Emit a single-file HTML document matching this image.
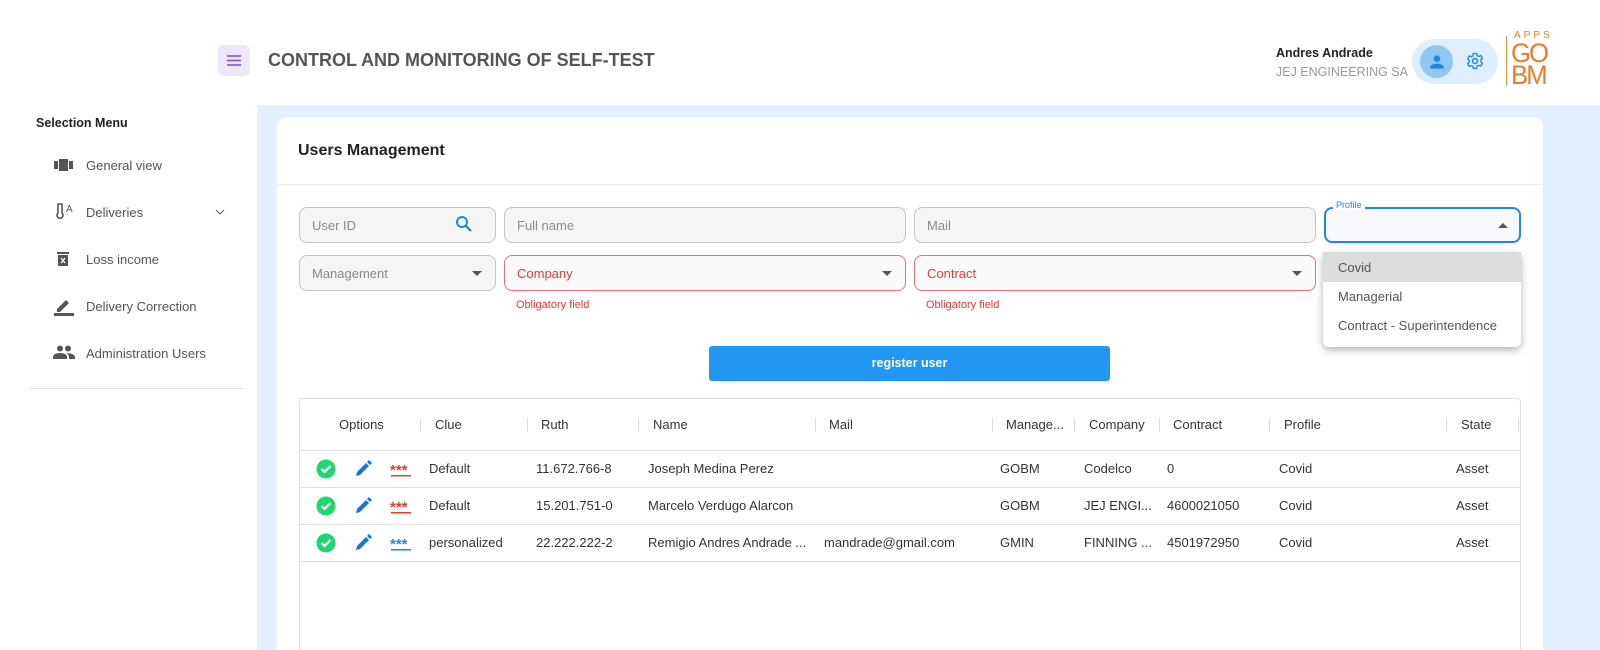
<!DOCTYPE html>
<html><head><meta charset="utf-8"><style>
*{box-sizing:border-box;margin:0;padding:0}
html,body{width:1600px;height:650px;overflow:hidden}
body{background:#fff;font-family:"Liberation Sans",Arial,sans-serif;position:relative;color:#333}
.a{position:absolute}
.blue{left:257px;top:105px;width:1343px;height:545px;background:#e3f0fd}
.card{left:277px;top:117px;width:1266px;height:533px;background:#fff;border-radius:10px 10px 0 0}
.inp{position:absolute;height:36px;border:1px solid #c4c4c4;border-radius:8px;background:#f5f5f5;font-size:13px;color:#8a8a8a;padding:10px 12px}
.red{border-color:#e57373;color:#e53935;background:#fafafa}
.err{position:absolute;font-size:11px;color:#e53935}
.tri{position:absolute;width:0;height:0;border-left:5px solid transparent;border-right:5px solid transparent;border-top:5px solid #555}
.th{position:absolute;font-size:13px;color:#333;top:417px}
.sep{position:absolute;width:1px;height:14px;background:#ddd;top:418px}
.td{position:absolute;font-size:13px;color:#333}
.menu{position:absolute;left:86px;font-size:13px;color:#555}
.hl{position:absolute;left:299px;width:1221px;height:1px;background:#e0e0e0}
</style></head><body>
<div class="a" style="left:218px;top:45px;width:32px;height:31px;border-radius:6px;background:#ede7f9"></div>
<svg class="a" style="left:226px;top:54px" width="16" height="13"><g stroke="#7e57c2" stroke-width="1.6"><line x1="1" y1="2" x2="15" y2="2"/><line x1="1" y1="6.5" x2="15" y2="6.5"/><line x1="1" y1="11" x2="15" y2="11"/></g></svg>
<div class="a" style="left:268px;top:50px;font-size:18px;font-weight:bold;color:#555">CONTROL AND MONITORING OF SELF-TEST</div>
<div class="a" style="left:1276px;top:46px;font-size:12.5px;font-weight:bold;color:#222">Andres Andrade</div>
<div class="a" style="left:1276px;top:65px;font-size:12.5px;color:#999">JEJ ENGINEERING SA</div>
<div class="a" style="left:1412px;top:39px;width:86px;height:45px;border-radius:23px;background:#deeefb"></div>
<div class="a" style="left:1420px;top:45px;width:33px;height:33px;border-radius:50%;background:#90c8f5"></div>
<svg class="a" style="left:1427px;top:52px" width="20" height="20" viewBox="0 0 24 24"><path fill="#1e88e5" d="M12 12c2.2 0 4-1.8 4-4s-1.8-4-4-4-4 1.8-4 4 1.8 4 4 4zm0 2c-2.7 0-8 1.3-8 4v2h16v-2c0-2.7-5.3-4-8-4z"/></svg>
<svg class="a" style="left:1465px;top:51px" width="20" height="20" viewBox="0 0 24 24"><circle cx="12" cy="12" r="3" fill="none" stroke="#1e88e5" stroke-width="1.8"/><path fill="none" stroke="#1e88e5" stroke-width="1.6" d="M10 3h4l.5 2.5 2 1 2.4-1 2 3.4-1.9 1.7v2.4l1.9 1.7-2 3.4-2.4-1-2 1L14 21h-4l-.5-2.5-2-1-2.4 1-2-3.4 1.9-1.7v-2.4L3.1 9.3l2-3.4 2.4 1 2-1z"/></svg>
<div class="a" style="left:1506px;top:36px;width:1px;height:50px;background:#f08a3c"></div>
<div class="a" style="left:1514px;top:30px;font-size:10px;letter-spacing:3px;color:#f07a2a">APPS</div>
<div class="a" style="left:1511px;top:42px;font-size:27px;line-height:22px;color:#f07a2a;letter-spacing:-2px;transform:scaleX(0.95);transform-origin:left">GO<br>BM</div>
<div class="a" style="left:36px;top:116px;font-size:12.5px;font-weight:bold;color:#222">Selection Menu</div>
<svg class="a" style="left:54px;top:158px" width="20" height="14"><rect x="0" y="3" width="4" height="8" fill="#555"/><rect x="5" y="1" width="9" height="12" fill="#555"/><rect x="15" y="3" width="4" height="8" fill="#555"/></svg>
<div class="menu" style="top:158px">General view</div>
<svg class="a" style="left:55px;top:202px" width="20" height="18"><path d="M3 2h4v9a3 3 0 1 1-4 0z" fill="none" stroke="#555" stroke-width="1.6"/><text x="11" y="10" font-size="10" fill="#555" font-family="Liberation Sans">A</text></svg>
<div class="menu" style="top:205px">Deliveries</div>
<svg class="a" style="left:215px;top:209px" width="10" height="6"><path d="M1 1l4 4 4-4" fill="none" stroke="#666" stroke-width="1.2"/></svg>
<svg class="a" style="left:57px;top:251px" width="12" height="16"><rect x="0" y="1" width="12" height="2" fill="#555"/><rect x="1" y="4" width="10" height="11" fill="#555"/><path d="M4 7l4 5M8 7l-4 5" stroke="#fff" stroke-width="1.3"/></svg>
<div class="menu" style="top:252px">Loss income</div>
<svg class="a" style="left:54px;top:296px" width="20" height="20"><path d="M3 13l9-9 3 3-9 9H3z" fill="#555"/><rect x="0" y="17" width="20" height="3" fill="#555"/></svg>
<div class="menu" style="top:299px">Delivery Correction</div>
<svg class="a" style="left:53px;top:345px" width="22" height="14"><circle cx="7" cy="3.5" r="3" fill="#555"/><circle cx="15" cy="3.5" r="3" fill="#555"/><path d="M0 14v-2c0-3 4-4 7-4s7 1 7 4v2zM13 8c3 0 9 1 9 4v2h-6v-2c0-2-1-3-3-4z" fill="#555"/></svg>
<div class="menu" style="top:346px">Administration Users</div>
<div class="a" style="left:30px;top:388px;width:213px;height:1px;background:#e0e0e0"></div>
<div class="a blue"></div>
<div class="a card"></div>
<div class="a" style="left:298px;top:142px;font-size:16px;font-weight:bold;color:#222">Users Management</div>
<div class="a" style="left:277px;top:184px;width:1266px;height:1px;background:#eee"></div>
<div class="inp" style="left:299px;top:207px;width:197px">User ID</div>
<svg class="a" style="left:455px;top:215px" width="18" height="18"><circle cx="7" cy="7" r="5" fill="none" stroke="#1e88e5" stroke-width="2"/><path d="M11 11l5 5" stroke="#1e88e5" stroke-width="2.2"/></svg>
<div class="inp" style="left:504px;top:207px;width:402px">Full name</div>
<div class="inp" style="left:914px;top:207px;width:402px">Mail</div>
<div class="inp" style="left:1324px;top:207px;width:197px;border:2px solid #1e88e5;background:#f7f9fc"></div>
<div class="a" style="left:1333px;top:200px;background:#fff;padding:0 3px;font-size:9px;color:#1e88e5">Profile</div>
<div class="tri" style="left:1498px;top:223px;border-top:0;border-bottom:5px solid #555"></div>
<div class="inp" style="left:299px;top:255px;width:197px">Management</div>
<div class="tri" style="left:472px;top:271px"></div>
<div class="inp red" style="left:504px;top:255px;width:402px">Company</div>
<div class="tri" style="left:882px;top:271px"></div>
<div class="inp red" style="left:914px;top:255px;width:402px">Contract</div>
<div class="tri" style="left:1292px;top:271px"></div>
<div class="err" style="left:516px;top:299px">Obligatory field</div>
<div class="err" style="left:926px;top:299px">Obligatory field</div>
<div class="a" style="left:1323px;top:252px;width:198px;height:95px;background:#fff;border-radius:6px;box-shadow:0 3px 8px rgba(0,0,0,.3)"></div>
<div class="a" style="left:1323px;top:252px;width:198px;height:30px;background:#dcdcdc"></div>
<div class="a" style="left:1338px;top:260px;font-size:13px;color:#555">Covid</div>
<div class="a" style="left:1338px;top:289px;font-size:13px;color:#555">Managerial</div>
<div class="a" style="left:1338px;top:318px;font-size:13px;color:#555">Contract - Superintendence</div>
<div class="a" style="left:709px;top:346px;width:401px;height:35px;background:#2196f3;border-radius:3px;color:#fff;font-size:12.5px;font-weight:bold;text-align:center;line-height:35px">register user</div>
<div class="a" style="left:299px;top:398px;width:1222px;height:252px;border:1px solid #e0e0e0;border-bottom:0;border-radius:4px 4px 0 0"></div>
<div class="th" style="left:339px">Options</div><div class="sep" style="left:420px"></div>
<div class="th" style="left:435px">Clue</div><div class="sep" style="left:527px"></div>
<div class="th" style="left:541px">Ruth</div><div class="sep" style="left:638px"></div>
<div class="th" style="left:653px">Name</div><div class="sep" style="left:815px"></div>
<div class="th" style="left:829px">Mail</div><div class="sep" style="left:992px"></div>
<div class="th" style="left:1006px">Manage...</div><div class="sep" style="left:1074px"></div>
<div class="th" style="left:1089px">Company</div><div class="sep" style="left:1159px"></div>
<div class="th" style="left:1173px">Contract</div><div class="sep" style="left:1269px"></div>
<div class="th" style="left:1284px">Profile</div><div class="sep" style="left:1446px"></div>
<div class="th" style="left:1461px">State</div><div class="sep" style="left:1518px"></div>
<div class="hl" style="top:450px"></div><div class="hl" style="top:487px"></div><div class="hl" style="top:524px"></div><div class="hl" style="top:561px"></div>
<svg class="a" style="left:316px;top:458px" width="100" height="100">
<g><circle cx="10" cy="11" r="9.5" fill="#1ed76f"/><path d="M5.5 11l3 3 6-6" fill="none" stroke="#fff" stroke-width="2.2"/><path d="M40 18l1-4 9-9 3 3-9 9z" fill="#1976d2"/><path d="M51 4l2-2 3 3-2 2z" fill="#1976d2"/><text x="74" y="17" font-size="15" fill="#e53935" font-family="Liberation Sans" font-weight="bold">***</text><rect x="75" y="17" width="20" height="1.5" fill="#e53935"/></g>
<g transform="translate(0,37)"><circle cx="10" cy="11" r="9.5" fill="#1ed76f"/><path d="M5.5 11l3 3 6-6" fill="none" stroke="#fff" stroke-width="2.2"/><path d="M40 18l1-4 9-9 3 3-9 9z" fill="#1976d2"/><path d="M51 4l2-2 3 3-2 2z" fill="#1976d2"/><text x="74" y="17" font-size="15" fill="#e53935" font-family="Liberation Sans" font-weight="bold">***</text><rect x="75" y="17" width="20" height="1.5" fill="#e53935"/></g>
<g transform="translate(0,74)"><circle cx="10" cy="11" r="9.5" fill="#1ed76f"/><path d="M5.5 11l3 3 6-6" fill="none" stroke="#fff" stroke-width="2.2"/><path d="M40 18l1-4 9-9 3 3-9 9z" fill="#1976d2"/><path d="M51 4l2-2 3 3-2 2z" fill="#1976d2"/><text x="74" y="17" font-size="15" fill="#1e88e5" font-family="Liberation Sans" font-weight="bold">***</text><rect x="75" y="17" width="20" height="1.5" fill="#1e88e5"/></g>
</svg>
<div class="td" style="left:429px;top:461px">Default</div><div class="td" style="left:536px;top:461px">11.672.766-8</div><div class="td" style="left:648px;top:461px">Joseph Medina Perez</div><div class="td" style="left:1000px;top:461px">GOBM</div><div class="td" style="left:1084px;top:461px">Codelco</div><div class="td" style="left:1167px;top:461px">0</div><div class="td" style="left:1279px;top:461px">Covid</div><div class="td" style="left:1456px;top:461px">Asset</div>
<div class="td" style="left:429px;top:498px">Default</div><div class="td" style="left:536px;top:498px">15.201.751-0</div><div class="td" style="left:648px;top:498px">Marcelo Verdugo Alarcon</div><div class="td" style="left:1000px;top:498px">GOBM</div><div class="td" style="left:1084px;top:498px">JEJ ENGI...</div><div class="td" style="left:1167px;top:498px">4600021050</div><div class="td" style="left:1279px;top:498px">Covid</div><div class="td" style="left:1456px;top:498px">Asset</div>
<div class="td" style="left:429px;top:535px">personalized</div><div class="td" style="left:536px;top:535px">22.222.222-2</div><div class="td" style="left:648px;top:535px">Remigio Andres Andrade ...</div><div class="td" style="left:824px;top:535px">mandrade@gmail.com</div><div class="td" style="left:1000px;top:535px">GMIN</div><div class="td" style="left:1084px;top:535px">FINNING ...</div><div class="td" style="left:1167px;top:535px">4501972950</div><div class="td" style="left:1279px;top:535px">Covid</div><div class="td" style="left:1456px;top:535px">Asset</div>
</body></html>
